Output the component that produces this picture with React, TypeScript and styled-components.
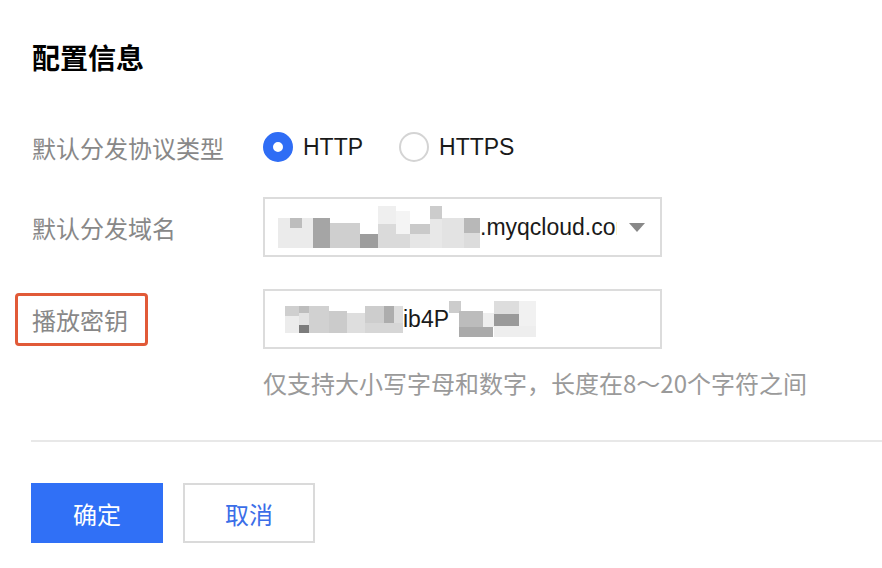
import React from "react";
import styled, { createGlobalStyle } from "styled-components";

const GlobalStyle = createGlobalStyle`
  html, body { margin: 0; padding: 0; background: #fff; }
  body {
    font-family: "Liberation Sans", "Noto Sans CJK SC", sans-serif;
    -webkit-font-smoothing: antialiased;
  }
`;

const Page = styled.div`
  width: 882px;
  height: 568px;
  overflow: hidden;
  padding-left: 31px;
  box-sizing: border-box;
  display: flex;
  flex-direction: column;
`;

const Title = styled.h2`
  margin: 37px 0 0 1px;
  height: 40px;
  line-height: 40px;
  font-size: 28px;
  font-weight: 700;
  color: #000;
  font-family: "Noto Sans CJK SC", sans-serif;
`;

const Row = styled.div<{ $h: number; $mt: number }>`
  display: flex;
  align-items: center;
  height: ${(p) => p.$h}px;
  margin-top: ${(p) => p.$mt}px;
`;

const Label = styled.div`
  width: 232px;
  flex: none;
  font-family: "Noto Sans CJK SC", sans-serif;
  font-size: 24px;
  color: #888;
  padding-left: 1px;
  box-sizing: border-box;
`;

const Highlight = styled.span`
  display: inline-flex;
  align-items: center;
  height: 53px;
  box-sizing: border-box;
  border: 3px solid #e15a38;
  border-radius: 4px;
  padding: 0 17px 0 14px;
  margin-left: -17px;
`;

const RadioGroup = styled.div`
  display: flex;
  align-items: center;
`;

const RadioItem = styled.label`
  display: flex;
  align-items: center;
  margin-right: 36px;
  font-size: 23px;
  color: #1a1a1a;
`;

const RadioCircle = styled.span<{ $on?: boolean }>`
  width: 30px;
  height: 30px;
  box-sizing: border-box;
  border-radius: 50%;
  border: ${(p) => (p.$on ? "10px solid #2f6df5" : "2px solid #d4d4d4")};
  background: #fff;
  margin-right: 10px;
`;

const Field = styled.div`
  width: 399px;
  height: 60px;
  box-sizing: border-box;
  border: 2px solid #dcdcdc;
  display: flex;
  align-items: center;
  font-size: 23px;
  color: #1a1a1a;
`;

const SelectValue = styled.div`
  flex: 1;
  display: flex;
  align-items: center;
  overflow: hidden;
  white-space: nowrap;
  padding-left: 13px;
  margin-right: 12px;
`;

const Caret = styled.span`
  width: 0;
  height: 0;
  border-left: 8px solid transparent;
  border-right: 8px solid transparent;
  border-top: 9px solid #888;
  margin-right: 15px;
  flex: none;
`;

const InputValue = styled.div`
  display: flex;
  align-items: center;
  padding-left: 20px;
  white-space: nowrap;
`;

const Mosaic = styled.svg`
  display: block;
  flex: none;
`;

const Hint = styled.div`
  margin: 18px 0 0 232px;
  height: 32px;
  line-height: 32px;
  font-size: 24px;
  color: #9a9a9a;
  font-family: "Noto Sans CJK SC", sans-serif;
  white-space: nowrap;
`;

const Divider = styled.div`
  margin-top: 41px;
  height: 2px;
  background: #e8e8e8;
  margin-right: -20px;
`;

const Actions = styled.div`
  display: flex;
  gap: 20px;
  margin-top: 41px;
`;

const Button = styled.button<{ $primary?: boolean }>`
  width: 132px;
  height: 60px;
  box-sizing: border-box;
  border: ${(p) => (p.$primary ? "none" : "2px solid #dadada")};
  background: ${(p) => (p.$primary ? "#3070f6" : "#fff")};
  color: ${(p) => (p.$primary ? "#fff" : "#3b6ee8")};
  font-family: "Noto Sans CJK SC", sans-serif;
  font-size: 24px;
  padding: 0;
  cursor: pointer;
`;

type Block = [number, number, number, number, string];

const domainBlocks: Block[] = [
  [0, 12, 35, 30, "#ebebeb"],
  [12, 12, 12, 10, "#bdbdbd"],
  [35, 12, 17, 30, "#a5a5a5"],
  [52, 17, 30, 25, "#cfcfcf"],
  [82, 28, 18, 14, "#9d9d9d"],
  [100, 0, 18, 28, "#efefef"],
  [100, 18, 32, 24, "#dadada"],
  [118, 5, 14, 23, "#f4f4f4"],
  [132, 18, 20, 10, "#cacaca"],
  [132, 28, 20, 14, "#e6e6e6"],
  [152, 0, 12, 13, "#cccccc"],
  [152, 13, 12, 29, "#e8e8e8"],
  [164, 12, 22, 30, "#e3e3e3"],
  [186, 12, 16, 15, "#b8b8b8"],
  [186, 27, 16, 15, "#dcdcdc"],
];

const keyLeftBlocks: Block[] = [
  [0, 0, 14, 10, "#cfcfcf"],
  [0, 10, 14, 17, "#ececec"],
  [14, 0, 10, 7, "#bdbdbd"],
  [14, 7, 10, 12, "#e2e2e2"],
  [14, 19, 10, 8, "#7c7c7c"],
  [24, 0, 20, 27, "#d1d1d1"],
  [44, 5, 18, 22, "#cbcbcb"],
  [62, 7, 18, 20, "#dedede"],
  [80, 0, 19, 17, "#cdcdcd"],
  [80, 17, 38, 10, "#d6d6d6"],
  [99, 0, 10, 17, "#adadad"],
  [109, 0, 9, 17, "#dddddd"],
];

const keyRightBlocks: Block[] = [
  [0, 0, 12, 12, "#cccccc"],
  [10, 10, 24, 16, "#bcbcbc"],
  [10, 26, 34, 10, "#aaaaaa"],
  [34, 12, 12, 14, "#eeeeee"],
  [45, 0, 25, 13, "#dddddd"],
  [45, 13, 25, 12, "#9a9a9a"],
  [45, 25, 42, 11, "#eeeeee"],
  [70, 0, 17, 25, "#f1f1f1"],
];

const MosaicImage: React.FC<{ w: number; h: number; blocks: Block[] }> = ({ w, h, blocks }) => (
  <Mosaic width={w} height={h} viewBox={`0 0 ${w} ${h}`}>
    {blocks.map(([x, y, bw, bh, c], i) => (
      <rect key={i} x={x} y={y} width={bw} height={bh} fill={c} />
    ))}
  </Mosaic>
);

export default function App() {
  return (
    <>
      <GlobalStyle />
      <Page>
        <Title>配置信息</Title>

        <Row $h={40} $mt={50}>
          <Label>默认分发协议类型</Label>
          <RadioGroup>
            <RadioItem>
              <RadioCircle $on />
              HTTP
            </RadioItem>
            <RadioItem>
              <RadioCircle />
              HTTPS
            </RadioItem>
          </RadioGroup>
        </Row>

        <Row $h={60} $mt={30}>
          <Label>默认分发域名</Label>
          <Field>
            <SelectValue>
              <MosaicImage w={202} h={42} blocks={domainBlocks} />
              <span>.myqcloud.com</span>
            </SelectValue>
            <Caret />
          </Field>
        </Row>

        <Row $h={60} $mt={32}>
          <Label>
            <Highlight>播放密钥</Highlight>
          </Label>
          <Field>
            <InputValue>
              <MosaicImage w={118} h={27} blocks={keyLeftBlocks} />
              <span>ib4P</span>
              <MosaicImage w={87} h={36} blocks={keyRightBlocks} />
            </InputValue>
          </Field>
        </Row>

        <Hint>仅支持大小写字母和数字，长度在8～20个字符之间</Hint>

        <Divider />

        <Actions>
          <Button $primary>确定</Button>
          <Button>取消</Button>
        </Actions>
      </Page>
    </>
  );
}
